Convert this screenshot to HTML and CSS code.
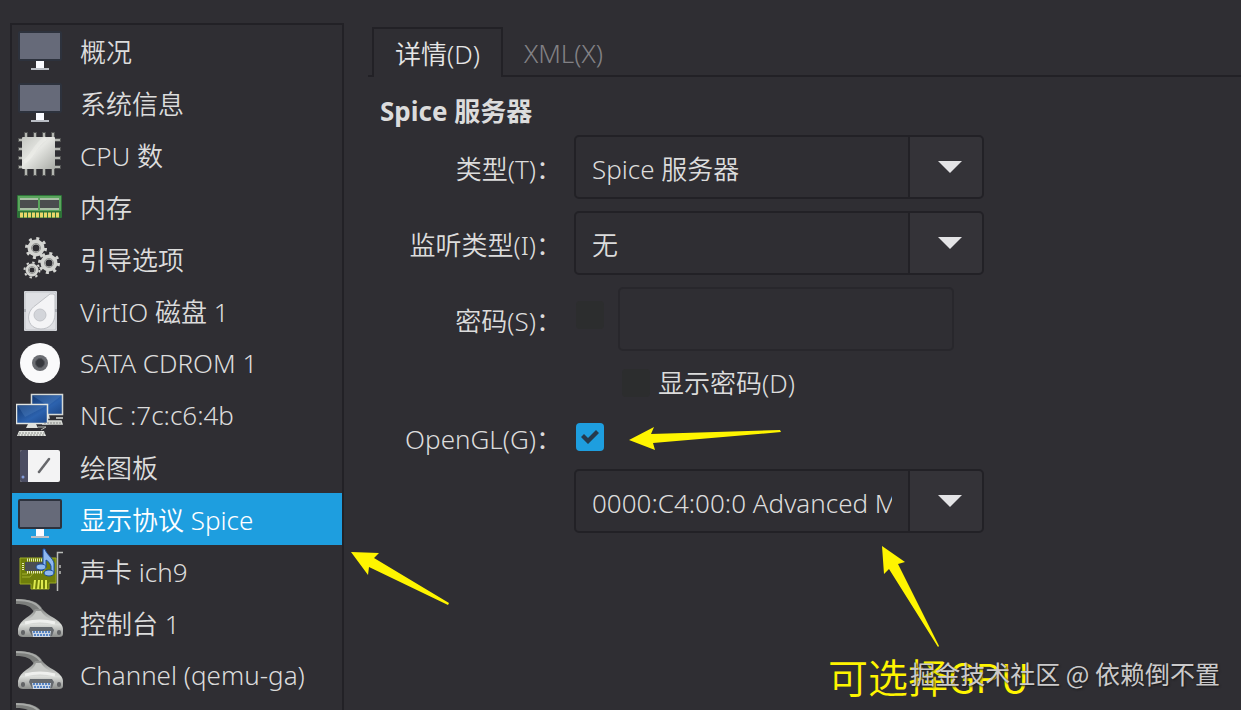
FILE: index.html
```html
<!DOCTYPE html>
<html lang="zh-CN">
  <head>
    <meta charset="UTF-8" />
    <meta name="viewport" content="width=device-width, initial-scale=1.0" />
    <title>显示协议 Spice</title>
    <link rel="stylesheet" href="styles.css" />
  </head>
  <body>
    <svg class="symbols" aria-hidden="true">
      <defs>
        <linearGradient id="silver" x1="0" y1="0" x2="1" y2="1">
          <stop offset="0" stop-color="#c4c6c1" />
          <stop offset="0.45" stop-color="#e6e7e3" />
          <stop offset="1" stop-color="#a9aba6" />
        </linearGradient>
        <linearGradient id="metal" x1="0" y1="0" x2="0" y2="1">
          <stop offset="0" stop-color="#8d8f8d" />
          <stop offset="0.55" stop-color="#dcdedb" />
          <stop offset="1" stop-color="#8b8d8b" />
        </linearGradient>
        <linearGradient id="screen" x1="0" y1="0" x2="1" y2="1">
          <stop offset="0" stop-color="#12376f" />
          <stop offset="0.6" stop-color="#2c62ae" />
          <stop offset="1" stop-color="#1b4688" />
        </linearGradient>
      </defs>

      <symbol id="monitor" viewBox="0 0 48 48">
        <rect x="2" y="4" width="44" height="30" rx="2" fill="#2d323d" />
        <rect x="4" y="6" width="40" height="26" fill="#666a79" />
        <rect x="20" y="34" width="8" height="7" fill="#fafbff" />
        <rect x="15" y="41" width="18" height="2" fill="#b9bdc4" />
      </symbol>

      <symbol id="cpu" viewBox="0 0 48 48">
        <path d="M10 1v44M19 1v44M28 1v44M37 1v44M2 9h43M2 18h43M2 27h43M2 36h43" stroke="#777a75" stroke-width="4" opacity="0.5" />
        <path d="M10 2v42M19 2v42M28 2v42M37 2v42M3 9h41M3 18h41M3 27h41M3 36h41" stroke="#b4b6b1" stroke-width="2" />
        <rect x="6" y="6" width="33" height="32" rx="1" fill="url(#silver)" />
        <path d="M8 31C17 26 18 14 30 7" fill="none" stroke="#f1f2ee" stroke-width="4" opacity="0.45" />
      </symbol>

      <symbol id="memory" viewBox="0 0 48 48">
        <rect x="1" y="12" width="45" height="23" rx="1" fill="#2e7438" />
        <rect x="2" y="13" width="43" height="15" fill="#5aa55d" />
        <path d="M4 15h18v12H4zM24 15h19v12H24z" fill="#a9bfa5" />
        <path d="M4 17h18v8H4zM24 17h19v8H24z" fill="#4a4c4e" />
        <path d="M4 32h40" stroke="#e9d66a" stroke-width="5" stroke-dasharray="3 1" />
      </symbol>

      <symbol id="gears" viewBox="0 0 48 48">
        <g fill="none" stroke="#d3d4d1">
          <circle cx="20" cy="13" r="9.5" stroke-width="3" stroke-dasharray="3 4.46" />
          <circle cx="20" cy="13" r="6" stroke-width="5" />
          <circle cx="33" cy="28" r="9.5" stroke-width="3" stroke-dasharray="3 4.46" />
          <circle cx="33" cy="28" r="6" stroke-width="5" />
          <circle cx="16" cy="35" r="7.5" stroke-width="2" stroke-dasharray="2.4 3.49" />
          <circle cx="16" cy="35" r="4.5" stroke-width="4" />
        </g>
        <g fill="none" stroke="#8f918f">
          <circle cx="20" cy="13" r="4.5" />
          <circle cx="33" cy="28" r="4.5" />
          <circle cx="16" cy="35" r="3.5" />
        </g>
      </symbol>

      <symbol id="disk" viewBox="0 0 48 48">
        <rect x="8" y="4" width="33" height="40" rx="1" fill="#d5d7dc" />
        <rect x="9" y="5" width="31" height="38" rx="2" fill="#dfe0e4" stroke="#c3c5ca" />
        <path d="M34 7h3q2 0 2 2v18c0 9-6 15-14 15-9 0-14-7-12-15 1-4 4-7 7-9z" fill="#f4f4f6" stroke="#bfc1c6" />
        <circle cx="24" cy="28" r="6" fill="#d3d5da" stroke="#c3c5ca" />
        <path d="M9 22v3M40 22v3" stroke="#888b93" />
      </symbol>

      <symbol id="cdrom" viewBox="0 0 48 48">
        <circle cx="24" cy="24" r="20" fill="#fafafb" />
        <circle cx="24" cy="24" r="8" fill="#6b6d72" />
        <circle cx="24" cy="24" r="4.5" fill="#36383d" stroke="#505257" />
      </symbol>

      <symbol id="network" viewBox="0 0 48 48">
        <path d="M32 23l1 4h-5M28 30h17l1 3H27zM40 27h7" fill="#cfd1cd" stroke="#d8dad6" stroke-width="1.5" />
        <rect x="15.5" y="3.500" width="31" height="20" fill="url(#screen)" stroke="#d5d9d6" stroke-width="1.5" />
        <path d="M17 5h28L32 15z" fill="#5786c2" opacity="0.35" />
        <rect x="0.500" y="13.500" width="31" height="19" fill="url(#screen)" stroke="#e2e5e1" stroke-width="1.5" />
        <path d="M2 15h28L9 26z" fill="#5786c2" opacity="0.35" />
        <path d="M12 33h8l2 4H10z" fill="#e0e2de" />
        <path d="M22 36h8l-5 3" fill="none" stroke="#b5b8b3" />
        <path d="M3 40h25l2 5H1z" fill="#e4e6e2" />
        <path d="M3 42h26M2 44h27M28 32h17" stroke="#777a76" stroke-dasharray="2 1" stroke-width="0.800" />
      </symbol>

      <symbol id="tablet" viewBox="0 0 48 48">
        <rect x="4" y="7" width="40" height="32" rx="2" fill="#f3f3f4" />
        <path d="M6 7h6v32H6q-2 0-2-2V9q0-2 2-2z" fill="#4b4d62" />
        <circle cx="7" cy="34" r="1.500" fill="#829cdb" />
        <path d="M23 29L33 16" stroke="#66676b" stroke-width="2.500" stroke-linecap="round" />
      </symbol>

      <symbol id="sound" viewBox="0 0 48 48">
        <path d="M4 11h36v25h-7v6H15v-5H4z" fill="#6f7e0a" stroke="#9cab22" />
        <path d="M6 30h8l4-5h9l3-4M6 27h5l3-4" fill="none" stroke="#a3b02c" />
        <path d="M11 13h16M11 25h16" stroke="#e6e9b6" stroke-width="3" stroke-dasharray="1 1" />
        <rect x="9" y="15" width="18" height="9" fill="#4b4e53" />
        <path d="M7 16v8" stroke="#e6e9b6" stroke-width="2" stroke-dasharray="1 1" />
        <path d="M18 42l1-9M22 42l1-9M26 42v-9M30 42v-9" stroke="#dfea4e" stroke-width="2" />
        <path d="M47 5.500h-5.500V44M44 18v3M44 24v3" fill="none" stroke="#b9bbb8" stroke-width="1.500" />
        <g fill="#8fb9ef" stroke="#1b4da0">
          <path d="M27 2h2c1 5 8 9 9 14v10h-3v-7c-1-3-3-5-5-6v7h-3z" />
          <ellipse cx="25" cy="20" rx="5" ry="3" />
          <ellipse cx="33" cy="26" rx="5" ry="3" />
        </g>
      </symbol>

      <symbol id="serial" viewBox="0 0 48 48">
        <path d="M0 0C12 0 24 2 27 12l-9 2C16 7 9 5 0 5z" fill="#7c7e7c" />
        <path d="M0 1C11 1 21 3 25 11" fill="none" stroke="#a8aaa8" stroke-width="2" />
        <path d="M19 10h7c3 3 6 6 12 9 5 3 9 7 9 11v5q0 3-4 3H7q-4 0-5-3v-5c1-5 4-8 8-11 4-3 7-5 9-9z" fill="url(#metal)" />
        <path d="M20 12h5c3 5 7 7 11 9H11c4-2 7-4 9-9z" fill="#c7c9c6" />
        <path d="M9 24q15-4 30 0" fill="none" stroke="#eff0ee" stroke-width="3" />
        <path d="M14 28h22l2 3-2 6H16l-3-6z" fill="#65696e" />
        <path d="M16 32h19l-1 6H17z" fill="#ccd7e6" />
        <path d="M17 33h18M18 36h16" stroke="#5785c5" stroke-width="2" stroke-dasharray="2 1" />
        <rect x="5" y="31" width="4" height="5" rx="2" fill="#626466" />
        <rect x="41" y="31" width="4" height="5" rx="2" fill="#626466" />
      </symbol>
    </svg>

    <div class="app-container">
      <nav class="sidebar">
        <a href="#"><svg class="icon"><use href="#monitor" /></svg>概况</a>
        <a href="#"><svg class="icon"><use href="#monitor" /></svg>系统信息</a>
        <a href="#"><svg class="icon"><use href="#cpu" /></svg>CPU 数</a>
        <a href="#"><svg class="icon"><use href="#memory" /></svg>内存</a>
        <a href="#"><svg class="icon"><use href="#gears" /></svg>引导选项</a>
        <a href="#"><svg class="icon"><use href="#disk" /></svg>VirtIO 磁盘 1</a>
        <a href="#"><svg class="icon"><use href="#cdrom" /></svg>SATA CDROM 1</a>
        <a href="#"><svg class="icon"><use href="#network" /></svg>NIC :7c:c6:4b</a>
        <a href="#"><svg class="icon"><use href="#tablet" /></svg>绘图板</a>
        <a href="#" class="selected"><svg class="icon"><use href="#monitor" /></svg>显示协议 Spice</a>
        <a href="#"><svg class="icon"><use href="#sound" /></svg>声卡 ich9</a>
        <a href="#"><svg class="icon"><use href="#serial" /></svg>控制台 1</a>
        <a href="#"><svg class="icon"><use href="#serial" /></svg>Channel (qemu-ga)</a>
        <a href="#"><svg class="icon"><use href="#serial" /></svg></a>
      </nav>

      <main class="details">
        <div class="tabs">
          <button class="tab tab-active" type="button">详情(D)</button>
          <button class="tab" type="button">XML(X)</button>
        </div>

        <form class="panel">
          <h1>Spice 服务器</h1>
          <div class="form-grid">
            <label for="type">类型(T)：</label>
            <div class="combo">
              <select id="type">
                <option>Spice 服务器</option>
              </select>
            </div>

            <label for="listen">监听类型(I)：</label>
            <div class="combo">
              <select id="listen">
                <option>无</option>
              </select>
            </div>

            <label for="password">密码(S)：</label>
            <div class="password">
              <input type="checkbox" aria-label="密码" disabled />
              <input type="password" id="password" disabled />
            </div>

            <div class="show-password">
              <input type="checkbox" id="show" disabled />
              <label for="show">显示密码(D)</label>
            </div>

            <label for="opengl">OpenGL(G)：</label>
            <div class="opengl">
              <input type="checkbox" id="opengl" checked />
            </div>

            <div class="combo gpu">
              <select aria-label="GPU">
                <option>0000:C4:00:0 Advanced Micro Devices</option>
              </select>
            </div>
          </div>
        </form>
      </main>

      <!-- yellow marks drawn over the window -->
      <svg class="arrows" aria-hidden="true">
        <path d="M629 440L654 427 651 434 780 430 781 432 653 443 655 450z" />
        <path d="M351 552L379 553 374 558 449 603 448 605 369 567 368 575z" />
        <path d="M882 546L905 562 898 564 939 646 938 647 889 569 884 574z" />
      </svg>
      <p class="note">可选择GPU</p>
      <p class="watermark">掘金技术社区 @ 依赖倒不置</p>
    </div>
  </body>
</html>
```

FILE: styles.css
```css
* {
  margin: 0;
  padding: 0;
  box-sizing: border-box;
}

body {
  background-color: #2f2e33;
  color: #dcdcdc;
  font-family: "Noto Sans", "Noto Sans CJK SC", sans-serif;
  font-size: 26px;
  font-weight: 350;
  line-height: 40px;
}

button,
input,
select {
  font: inherit;
  color: inherit;
}

.symbols {
  position: absolute;
  width: 0;
  height: 0;
}

.app-container {
  position: relative;
  display: flex;
  gap: 24px;
  height: 100vh;
  padding: 23px 0 0 10px;
  overflow: hidden;
}

/* Hardware list */

.sidebar {
  flex: 0 0 334px;
  border: 2px solid #222126;
  border-bottom: none;
  line-height: normal;
  overflow: hidden;
}

.sidebar > a {
  display: flex;
  align-items: center;
  gap: 16px;
  height: 52px;
  padding: 2px 4px;
  color: inherit;
  text-decoration: none;
  white-space: nowrap;
}

.sidebar > .selected {
  background-color: #1e9edf;
  color: white;
}

.icon {
  flex: none;
  width: 48px;
  height: 48px;
}

/* Tabs */

.details {
  flex: 1;
  min-width: 0;
  padding-top: 4px;
}

.tabs {
  display: flex;
  height: 50px;
  padding-left: 4px;
  border-bottom: 2px solid #222126;
}

.tab {
  height: 50px;
  padding: 2px 21px 0;
  border: none;
  background-color: transparent;
  color: #828185;
}

.tab-active {
  border: 2px solid #222126;
  border-bottom: none;
  background-color: #2f2e33;
  color: #e6e6e6;
}

/* Form */

.panel {
  padding: 14px 12px;
}

.panel > h1 {
  margin-bottom: 4px;
  font-size: 26px;
  font-weight: 700;
}

.form-grid {
  display: grid;
  grid-template-columns: 182px 410px;
  gap: 12px;
  align-items: center;
}

.form-grid > label {
  height: 40px;
  padding-top: 2px;
  text-align: right;
  white-space: nowrap;
}

.combo {
  position: relative;
  height: 64px;
}

.combo > select {
  width: 100%;
  height: 100%;
  padding: 4px 90px 0 16px;
  border: 2px solid #222126;
  border-radius: 5px;
  appearance: none;
  background: linear-gradient(#222126, #222126) right 72px top / 2px 100% no-repeat,
    linear-gradient(#343338, #343338) right top / 72px 100% no-repeat, #2f2e33;
}

.combo::after {
  content: "";
  position: absolute;
  top: 26px;
  right: 22px;
  width: 24px;
  height: 12px;
  background-color: #e4e4e6;
  clip-path: polygon(0 0, 100% 0, 50% 100%);
  pointer-events: none;
}

.gpu,
.show-password {
  grid-column: 2;
}

.password {
  display: flex;
  gap: 14px;
  height: 64px;
  padding-left: 2px;
}

.password > input[type="checkbox"] {
  margin-top: 14px;
}

.password > input[type="password"] {
  width: 336px;
  padding: 0 16px;
  border: 2px solid #28272c;
  border-radius: 5px;
  background-color: #2f2e33;
}

.show-password {
  display: flex;
  align-items: center;
  gap: 8px;
  height: 42px;
  padding: 0 0 2px 48px;
}

.opengl {
  display: flex;
  align-items: center;
  height: 40px;
  padding-left: 2px;
}

input[type="checkbox"] {
  flex: none;
  width: 28px;
  height: 28px;
  border-radius: 4px;
  appearance: none;
  background-color: #2c2d2e;
}

input[type="checkbox"]:checked {
  background-color: #1e9edf;
}

input[type="checkbox"]:checked::before {
  content: "";
  display: block;
  width: 28px;
  height: 28px;
  background-color: #263a4d;
  clip-path: polygon(5px 14px, 8px 11px, 12px 15px, 20px 7px, 23px 10px, 12px 21px);
}

/* Marks over the window */

.arrows {
  position: absolute;
  top: 0;
  left: 0;
  width: 100%;
  height: 100%;
  fill: #fff500;
  pointer-events: none;
}

.note {
  position: absolute;
  top: 652px;
  left: 828px;
  color: #fff500;
  font-family: "Noto Sans CJK SC", sans-serif;
  font-size: 40px;
  font-weight: 350;
  line-height: 48px;
}

.watermark {
  position: absolute;
  right: 21px;
  bottom: 17px;
  color: #cbcacb;
  font-family: "Noto Sans CJK SC", sans-serif;
  font-size: 25px;
  font-weight: 400;
  text-shadow: 1px 1px 2px #1a1a1a;
}
```
